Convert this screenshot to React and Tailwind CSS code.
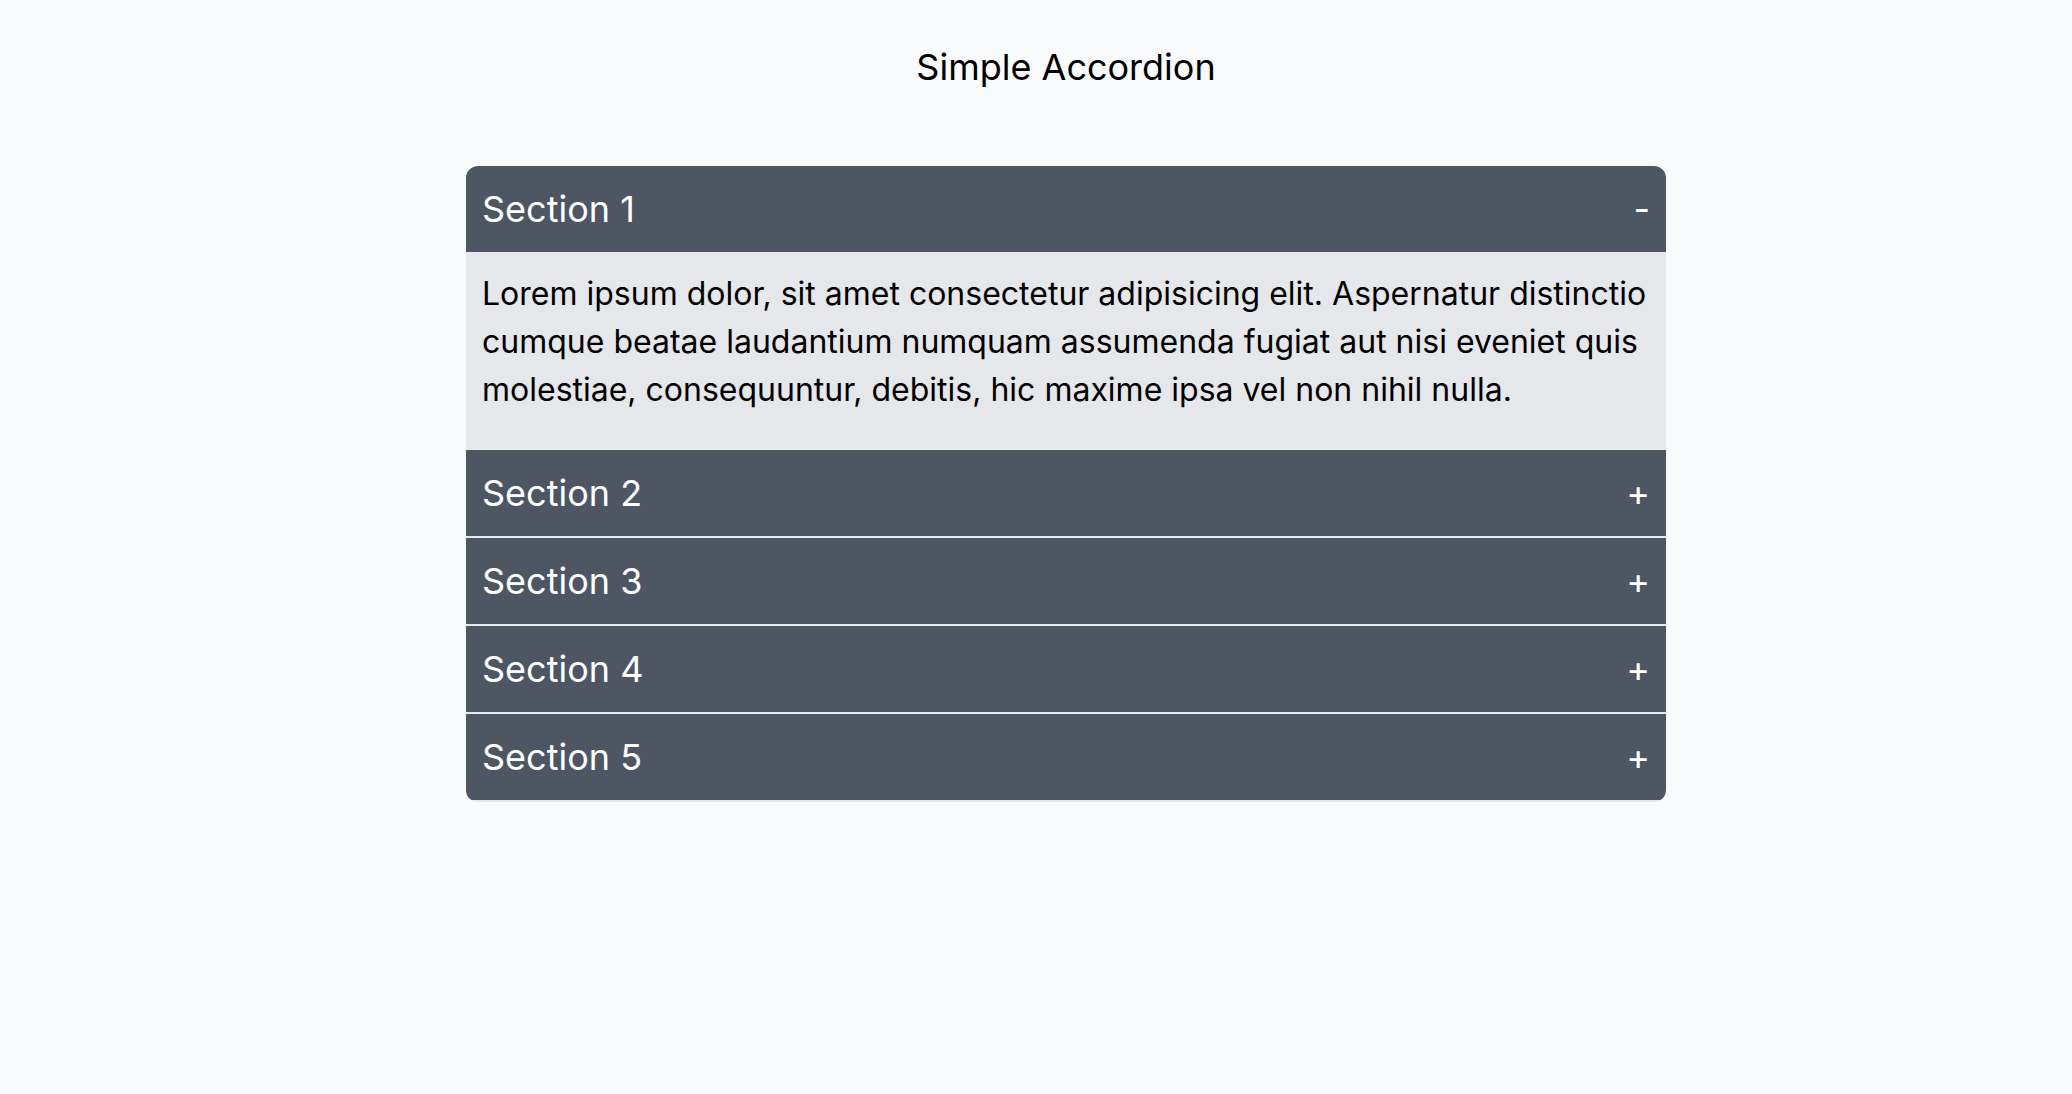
import React, { useState } from "react";

const body =
  "Lorem ipsum dolor, sit amet consectetur adipisicing elit. Aspernatur distinctio cumque beatae laudantium numquam assumenda fugiat aut nisi eveniet quis molestiae, consequuntur, debitis, hic maxime ipsa vel non nihil nulla.";

const sections = ["Section 1", "Section 2", "Section 3", "Section 4", "Section 5"];

export default function App() {
  const [open, setOpen] = useState(0);
  return (
    <div className="min-h-screen bg-[#f9fafb] pl-[60px] pt-[40px] font-['Inter',sans-serif] text-black">
      <h1 className="text-center text-[36px] font-normal leading-[54px]">Simple Accordion</h1>
      <div className="mx-auto mt-[72px] w-[1200px] overflow-hidden rounded-xl">
        {sections.map((title, i) => (
          <div key={title} className="border-b-2 border-[#e5e7eb]">
            <button
              type="button"
              onClick={() => setOpen(open === i ? -1 : i)}
              className="flex w-full items-center justify-between bg-[#4e5563] px-4 py-4 text-left text-[36px] leading-[54px] text-white"
            >
              <span>{title}</span>
              <span>{open === i ? "-" : "+"}</span>
            </button>
            {open === i && (
              <div className="border-t-2 border-[#e5e7eb] bg-[#e5e7eb] px-4 pb-[34px] pt-[16px] text-[32px] leading-[48px] text-black">
                {body}
              </div>
            )}
          </div>
        ))}
      </div>
    </div>
  );
}
